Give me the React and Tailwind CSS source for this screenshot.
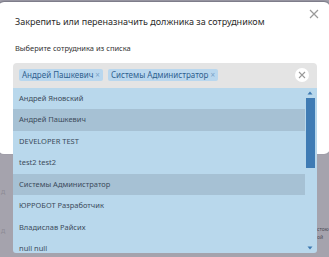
import React from 'react'

const people = [
  { name: 'Андрей Яновский', active: false },
  { name: 'Андрей Пашкевич', active: true },
  { name: 'DEVELOPER TEST', active: false },
  { name: 'test2 test2', active: false },
  { name: 'Системы Администратор', active: true },
  { name: 'ЮРРОБОТ Разработчик', active: false },
  { name: 'Владислав Райсих', active: false },
  { name: 'null null', active: false },
]

const Tag = ({ label }) => (
  <span className="flex items-center h-[12px] px-[3px] rounded-[2px] bg-[#b9d7ee] text-[#2f5f8f] text-[8px] leading-none">
    {label}
    <span className="ml-[2px] text-[#7aa3c8] text-[8px]">×</span>
  </span>
)

const App = () => {
  return (
    <div
      className="relative w-[329px] h-[257px] overflow-hidden bg-[#a5a3ad]"
      style={{ fontFamily: '"Noto Sans", "Liberation Sans", sans-serif' }}
    >
      {/* background page text peeking through */}
      <div className="absolute left-[317px] top-[225px] text-[5px] leading-[8px] text-[#4b4b55]">
        <div>стою</div>
        <div>ой</div>
      </div>
      <div className="absolute left-[1px] top-[172px] text-[7px] leading-[39px] text-[#8d8b95]">
        <div>д</div>
        <div>д</div>
      </div>

      {/* Modal */}
      <div className="absolute left-[-2px] top-[2px] w-[332px] h-[152px] rounded-[6px] bg-white shadow-[0_-1px_2px_rgba(60,60,80,0.5)]">
        <div className="pl-[17px] pt-[15px]">
          <h2 className="text-[9px] text-[#2b2b2b] leading-none">
            Закрепить или переназначить должника за сотрудником
          </h2>
        </div>
        <button className="absolute right-[10px] top-[6px] text-[#9a9a9a]">
          <svg width="12" height="12" viewBox="0 0 12 12" fill="none" stroke="currentColor" strokeWidth="1.2">
            <path d="M2 2l8 8M10 2l-8 8" />
          </svg>
        </button>

        <div className="pl-[17px] pt-[19px] text-[7.5px] text-[#333] leading-none">
          Выберите сотрудника из списка
        </div>

        {/* Select */}
        <div className="relative ml-[15px] mt-[10px] w-[304px]">
          <div className="flex items-center gap-[5px] h-[25px] pl-[6px] pr-[8px] rounded-t-[4px] bg-[#e4e4e4]">
            <Tag label="Андрей Пашкевич" />
            <Tag label="Системы Администратор" />
            <span className="ml-auto flex items-center justify-center w-[14px] h-[14px] rounded-full bg-white">
              <svg width="10" height="10" viewBox="0 0 10 10" fill="none" stroke="#9a9a9a" strokeWidth="1.1">
                <path d="M2 2l6 6M8 2l-6 6" />
              </svg>
            </span>
          </div>

          {/* Dropdown list */}
          <div className="absolute left-0 top-[25px] w-[304px] h-[165px] flex bg-[#b9d8ec] rounded-b-[3px] overflow-hidden">
            <div className="flex-1 flex flex-col">
              {people.map((p) => (
                <div
                  key={p.name}
                  className={`flex items-center shrink-0 h-[21.5px] pl-[6px] text-[7.5px] text-[#3c4b5b] ${
                    p.active ? 'bg-[#a6c1d4]' : ''
                  }`}
                >
                  {p.name}
                </div>
              ))}
            </div>
            {/* Scrollbar */}
            <div className="w-[10px] mr-[2px] flex flex-col items-center">
              <div className="h-[10px] flex items-center justify-center">
                <svg width="6" height="4" viewBox="0 0 6 4"><path d="M3 0.5L5.5 3.5H0.5z" fill="#3d78b0" /></svg>
              </div>
              <div className="w-[9px] h-[70px] bg-[#3f7bb4]" />
              <div className="flex-1" />
              <div className="h-[10px] flex items-center justify-center">
                <svg width="6" height="4" viewBox="0 0 6 4"><path d="M3 3.5L5.5 0.5H0.5z" fill="#3d78b0" /></svg>
              </div>
            </div>
          </div>
        </div>
      </div>
    </div>
  )
}

export default App
